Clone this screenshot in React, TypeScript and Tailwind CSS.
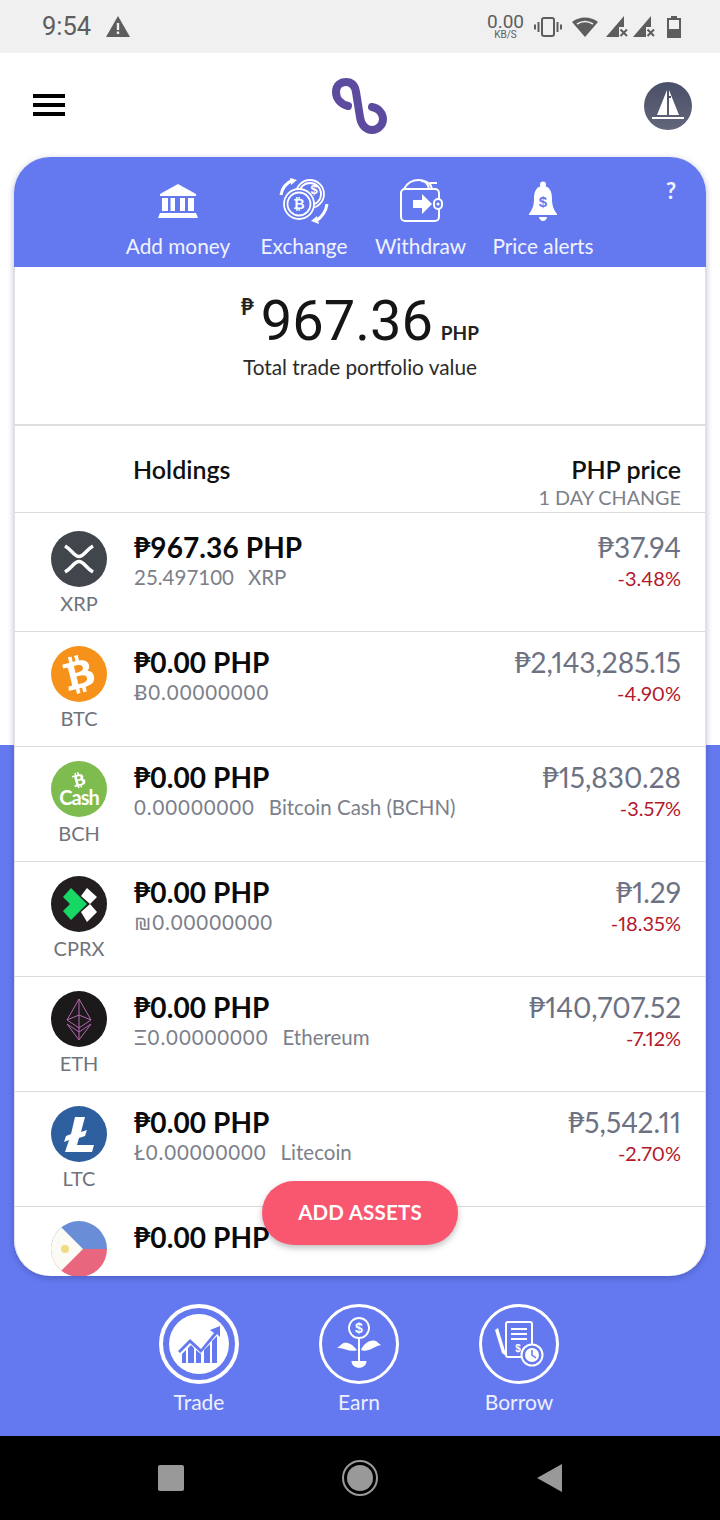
import type { FC, ReactNode } from "react";
import { FaBtc } from "react-icons/fa";

const BLUE = "#6479ef";

const Logo = () => (
  <svg width="56" height="56" viewBox="0 0 56 56" fill="none">
    <path
      d="M17 28C9 26 5 20 5 14C5 7 10 4 15 4C21 4 24 8 25 14L29 39C30 47 35 52 41 52C47 52 52 47 52 41C52 35 47 30 41 29"
      stroke="#5c4b9e"
      strokeWidth="8"
      strokeLinecap="round"
    />
  </svg>
);

const Avatar = () => (
  <svg width="48" height="48" viewBox="0 0 48 48">
    <defs>
      <linearGradient id="av" x1="0" y1="0" x2="0" y2="1">
        <stop offset="0" stopColor="#4a5068" />
        <stop offset="1" stopColor="#62667a" />
      </linearGradient>
    </defs>
    <circle cx="24" cy="24" r="24" fill="url(#av)" />
    <path d="M23 8V33H13ZM25 8L35 33H25Z" fill="#fff" />
    <rect x="8" y="35" width="32" height="2" fill="#fff" />
    <rect x="24" y="14" width="3" height="2" fill="#4a5068" />
  </svg>
);

const BankIcon = () => (
  <svg width="40" height="36" viewBox="0 0 40 36" fill="#fff">
    <path d="M20 1L38 11V13H2V11Z" />
    <path d="M4 15H10V28H4ZM12.500 15H17V28H12.500ZM22 15H27V28H22ZM30 15H36V28H30Z" />
    <path d="M2 30H38L40 35H0Z" />
  </svg>
);

const ExchangeIcon = () => (
  <svg width="50" height="48" viewBox="0 0 50 48" fill="none" stroke="#fff" strokeWidth="1.800">
    <circle cx="31" cy="17" r="14" />
    <circle cx="31" cy="17" r="11" />
    <circle cx="20" cy="27" r="15" fill={BLUE} />
    <circle cx="20" cy="27" r="11.500" />
    <text x="20" y="32" fontSize="14" fontWeight="700" fill="#fff" stroke="none" textAnchor="middle" fontFamily="Liberation Sans, sans-serif">
      ₿
    </text>
    <text x="35" y="17" fontSize="13" fontWeight="700" fill="#fff" stroke="none" textAnchor="middle" fontFamily="Liberation Sans, sans-serif">
      $
    </text>
    <path d="M2 18C3 11 7 6 14 3" strokeWidth="3" />
    <path d="M11 1L18 3L12 8Z" fill="#fff" stroke="none" />
    <path d="M48 27C47 34 43 40 37 44" strokeWidth="3" />
    <path d="M40 47L32 44L38 39Z" fill="#fff" stroke="none" />
  </svg>
);

const WithdrawIcon = () => (
  <svg width="44" height="44" viewBox="0 0 44 44" fill="none" stroke="#fff" strokeWidth="2">
    <path d="M5 10C8 4 14 1 20 1C26 1 29 5 30 10" />
    <path d="M22 2C27 2 32 4 33 10" />
    <path d="M31 4H38" />
    <rect x="2" y="10" width="38" height="32" rx="4" />
    <path d="M14 21H23V15L33 25L23 35V29H14Z" fill="#fff" stroke="none" />
    <rect x="35" y="20" width="8" height="10" rx="4" fill={BLUE} />
    <circle cx="39" cy="25" r="1.500" fill="#fff" stroke="none" />
  </svg>
);

const BellIcon = () => (
  <svg width="30" height="40" viewBox="0 0 30 40">
    <circle cx="15" cy="3.500" r="3" fill="#fff" />
    <path d="M15 5C22 5 24 11 24 18C24 25 26 29 29 33V34H1V33C4 29 6 25 6 18C6 11 8 5 15 5Z" fill="#fff" />
    <path d="M11 36H19C19 38 17 40 15 40C13 40 11 38 11 36Z" fill="#fff" />
    <text x="15" y="26" fontSize="15" fontWeight="700" fill={BLUE} textAnchor="middle" fontFamily="Liberation Sans, sans-serif">
      $
    </text>
  </svg>
);

const XrpIcon = () => (
  <svg width="56" height="56" viewBox="0 0 56 56">
    <circle cx="28" cy="28" r="28" fill="#41454c" />
    <path d="M14 15C21 19 23 25.500 28 25.500C33 25.500 35 19 42 15" fill="none" stroke="#fff" strokeWidth="3.500" />
    <path d="M14 41C21 37 23 30.500 28 30.500C33 30.500 35 37 42 41" fill="none" stroke="#fff" strokeWidth="3.500" />
  </svg>
);

const BtcIcon = () => (
  <div className="flex h-14 w-14 items-center justify-center rounded-full bg-[#f6921a]">
    <FaBtc className="rotate-[-14deg] text-[38px] text-[#fff]" />
  </div>
);

const BchIcon = () => (
  <div className="flex h-14 w-14 flex-col items-center justify-center rounded-full bg-[#7fbc4f] text-white">
    <FaBtc className="mb-[-1px] rotate-[-14deg] text-[16px]" />
    <span className="text-[20px] font-bold leading-[20px] tracking-[-1px]">Cash</span>
  </div>
);

const CprxIcon = () => (
  <svg width="56" height="56" viewBox="0 0 56 56">
    <circle cx="28" cy="28" r="28" fill="#231f20" />
    <path d="M12 21L20 12L36 28L20 44L12 35L19 28Z" fill="#17d864" />
    <path d="M36 12L46 21L39 28L30 20ZM39 28L46 36L36 46L30 36Z" fill="#fff" />
  </svg>
);

const EthIcon = () => (
  <svg width="56" height="56" viewBox="0 0 56 56" fill="none">
    <circle cx="28" cy="28" r="28" fill="#1c191b" />
    <g stroke="#b567b0" strokeWidth="1">
      <path d="M28 8L16 29L28 37L40 29Z" />
      <path d="M28 8V48M16 29L28 24L40 29" />
      <path d="M16 33L28 49L40 33L28 41Z" />
    </g>
  </svg>
);

const LtcIcon = () => (
  <svg width="56" height="56" viewBox="0 0 56 56">
    <circle cx="28" cy="28" r="28" fill="#2d5e9e" />
    <path d="M24 11H34L30 26L36 24L34 30L28 32L26 39H43L41 46H14L18 34L13 36L15 30L20 28Z" fill="#fff" />
  </svg>
);

const FlagIcon = () => (
  <svg width="56" height="56" viewBox="0 0 56 56">
    <defs>
      <clipPath id="flag">
        <circle cx="28" cy="28" r="28" />
      </clipPath>
    </defs>
    <g clipPath="url(#flag)">
      <rect width="56" height="28" fill="#6a8dd8" />
      <rect y="28" width="56" height="28" fill="#e8677f" />
      <path d="M0 -4L32 28L0 60Z" fill="#fbfaf4" />
      <circle cx="14" cy="28" r="4" fill="#f0dc80" />
    </g>
  </svg>
);

const TradeIcon = () => (
  <div className="flex h-[80px] w-[80px] items-center justify-center rounded-full border-[4px] border-white">
    <div className="flex h-[60px] w-[60px] items-center justify-center rounded-full bg-white">
      <svg width="44" height="40" viewBox="0 0 44 40" fill={BLUE}>
        <path d="M5 39V30L9 26V39ZM11 39V24L14 21L17 24V39ZM19 39V26L24 30V39ZM27 39V26L33 20V39ZM35 39V17L40 12V39Z" />
        <path d="M1 27L13 15L24 25L37 9L33 6L43 2L43 13L40 10L24 29L13 19L3 29Z" />
      </svg>
    </div>
  </div>
);

const EarnIcon = () => (
  <div className="flex h-[80px] w-[80px] items-center justify-center rounded-full border-[3px] border-white">
    <svg width="46" height="54" viewBox="0 0 46 54" fill="none">
      <circle cx="23" cy="11" r="10" stroke="#fff" strokeWidth="1.800" />
      <text x="23" y="16" fontSize="14" fontWeight="700" fill="#fff" textAnchor="middle" fontFamily="Liberation Sans, sans-serif">
        $
      </text>
      <path d="M23 21V46" stroke="#fff" strokeWidth="2" />
      <path d="M21 33C16 26 9 24 6 27C4 29 2 30 1 31C8 30 14 36 21 33Z" fill="#fff" />
      <path d="M25 33C28 25 36 22 40 24C42 26 44 27 45 28C38 29 32 36 25 33Z" fill="#fff" />
      <path d="M13 44H33C33 50 28 53 23 53C18 53 13 50 13 44Z" fill="#fff" transform="translate(5.750 11) scale(0.750)" />
    </svg>
  </div>
);

const BorrowIcon = () => (
  <div className="flex h-[80px] w-[80px] items-center justify-center rounded-full border-[3px] border-white">
    <svg width="50" height="46" viewBox="0 0 50 46" fill="none">
      <path d="M1 9L4 7L11 30L12 35L8 32Z" fill="#fff" />
      <rect x="12" y="1" width="26" height="35" rx="2" stroke="#fff" strokeWidth="2" />
      <path d="M17 8H33M17 13H33M17 18H33" stroke="#fff" strokeWidth="2" />
      <text x="24" y="31" fontSize="10" fontWeight="700" fill="#fff" textAnchor="middle" fontFamily="Liberation Sans, sans-serif">
        $
      </text>
      <circle cx="38" cy="34" r="10.500" fill={BLUE} stroke="#fff" strokeWidth="2" />
      <circle cx="38" cy="34" r="7" fill="#fff" />
      <path d="M38 29V34L42 37" stroke={BLUE} strokeWidth="1.500" />
    </svg>
  </div>
);

const StatusBar = () => (
  <div className="flex h-[53px] items-center bg-[#f0f0f0] pl-[42px] pr-[39px] font-['Roboto',sans-serif] text-[#5d5d5d]">
    <span className="text-[25.500px] leading-none">9:54</span>
    <svg className="ml-[15px]" width="24" height="21" viewBox="0 0 24 21">
      <path d="M12 0L24 21H0Z" fill="#5d5d5d" />
      <rect x="10.800" y="7" width="2.400" height="7" fill="#f0f0f0" />
      <rect x="10.800" y="15.500" width="2.400" height="2.500" fill="#f0f0f0" />
    </svg>
    <div className="ml-auto flex items-center">
      <div className="flex flex-col items-center">
        <span className="text-[19px] leading-[17px]">0.00</span>
        <span className="text-[10px] leading-[10px]">KB/S</span>
      </div>
      <svg className="ml-[10px]" width="28" height="20" viewBox="0 0 28 20" fill="none" stroke="#5d5d5d" strokeWidth="2">
        <rect x="8" y="1" width="12" height="18" rx="2" />
        <path d="M4.500 5V15M1 7.500V12.500M23.500 5V15M27 7.500V12.500" />
      </svg>
      <svg className="ml-[10px]" width="26" height="20" viewBox="0 0 26 20">
        <path d="M13 20L0 5C7 -1 19 -1 26 5Z" fill="#5d5d5d" />
        <path d="M5 7C10 4 16 4 21 7" fill="none" stroke="#f0f0f0" strokeWidth="1.500" />
      </svg>
      <svg className="ml-[8px]" width="22" height="21" viewBox="0 0 22 21">
        <path d="M18 0V11H13V21H0Z" fill="#5d5d5d" />
        <path d="M14.500 13.500L21 20M21 13.500L14.500 20" stroke="#5d5d5d" strokeWidth="2" />
      </svg>
      <svg className="ml-[5px]" width="22" height="21" viewBox="0 0 22 21">
        <path d="M18 0V11H13V21H0Z" fill="#5d5d5d" />
        <path d="M14.500 13.500L21 20M21 13.500L14.500 20" stroke="#5d5d5d" strokeWidth="2" />
      </svg>
      <svg className="ml-[12px]" width="14" height="22" viewBox="0 0 14 22">
        <path d="M4 0H10V2H14V22H0V2H4Z" fill="#5d5d5d" />
        <rect x="2" y="4" width="10" height="9" fill="#f0f0f0" />
      </svg>
    </div>
  </div>
);

const Action: FC<{ label: string; icon: ReactNode; width: string }> = ({ label, icon, width }) => (
  <div className={`flex flex-col items-center ${width}`}>
    <div className="flex h-[48px] items-center">{icon}</div>
    <span className="mt-[9px] whitespace-nowrap text-[20.800px] leading-[24px] text-[#f1f3ff]">{label}</span>
  </div>
);

interface Holding {
  ticker: string;
  icon: ReactNode;
  value: string;
  amount: string;
  name?: string;
  price?: string;
  change?: string;
  first?: boolean;
}

const holdings: Holding[] = [
  { ticker: "XRP", icon: <XrpIcon />, value: "₱967.36 PHP", amount: "25.497100", name: "XRP", price: "₱37.94", change: "-3.48%", first: true },
  { ticker: "BTC", icon: <BtcIcon />, value: "₱0.00 PHP", amount: "Ƀ0.00000000", price: "₱2,143,285.15", change: "-4.90%" },
  { ticker: "BCH", icon: <BchIcon />, value: "₱0.00 PHP", amount: "0.00000000", name: "Bitcoin Cash (BCHN)", price: "₱15,830.28", change: "-3.57%" },
  { ticker: "CPRX", icon: <CprxIcon />, value: "₱0.00 PHP", amount: "₪0.00000000", price: "₱1.29", change: "-18.35%" },
  { ticker: "ETH", icon: <EthIcon />, value: "₱0.00 PHP", amount: "Ξ0.00000000", name: "Ethereum", price: "₱140,707.52", change: "-7.12%" },
  { ticker: "LTC", icon: <LtcIcon />, value: "₱0.00 PHP", amount: "Ł0.00000000", name: "Litecoin", price: "₱5,542.11", change: "-2.70%" },
];

const Row: FC<{ item: Holding }> = ({ item }) => (
  <div className={`flex border-t border-[#dcdcdc] pr-[25px] ${item.first ? "h-[119px] pt-[18px]" : "h-[115px] pt-[14px]"}`}>
    <div className="flex w-[120px] shrink-0 flex-col items-center pl-[10px]">
      {item.icon}
      <span className="mt-[4px] whitespace-nowrap text-[20px] leading-[24px] text-[#6f737b]">{item.ticker}</span>
    </div>
    <div className="flex flex-col">
      <span className="text-[28px] font-bold leading-[32px] tracking-[0.1px] text-[#0a0a0a]">{item.value}</span>
      <span className="mt-[2px] flex gap-[14px] text-[20.500px] leading-[24px] text-[#7c808a]">
        <span className={item.first ? "" : "tracking-[0.900px]"}>{item.amount}</span>
        {item.name && <span>{item.name}</span>}
      </span>
    </div>
    <div className="ml-auto flex flex-col items-end">
      <span className="text-[28px] leading-[32px] text-[#6d7283] proportional-nums">{item.price}</span>
      <span className="mt-[3px] text-[20px] leading-[24px] text-[#b3182c] proportional-nums">{item.change}</span>
    </div>
  </div>
);

const NavItem: FC<{ label: string; icon: ReactNode }> = ({ label, icon }) => (
  <div className="flex w-[100px] flex-col items-center">
    {icon}
    <span className="mt-[6px] text-[21px] leading-[24px] text-[#eef0ff]">{label}</span>
  </div>
);

export default function App() {
  return (
    <div className="flex h-[1520px] w-[720px] flex-col overflow-hidden bg-white font-['Lato',sans-serif]">
      <StatusBar />

      <div className="flex h-[104px] items-center justify-between pl-[33px] pr-[28px]">
        <div className="flex w-[32px] flex-col gap-[5px]">
          <div className="h-[4px] bg-black" />
          <div className="h-[4px] bg-black" />
          <div className="h-[4px] bg-black" />
        </div>
        <div className="ml-[8px] mt-[2px]">
          <Logo />
        </div>
        <div className="mt-[2px]">
          <Avatar />
        </div>
      </div>

      <div className="flex flex-1 flex-col bg-[linear-gradient(#fff_0,#fff_588px,#6479ef_588px)] px-[14px]">
        <div className="relative h-[1119px] overflow-hidden rounded-[36px] bg-white shadow-[inset_1px_0_#e0e0e0,inset_-1px_0_#e0e0e0,0_2px_6px_rgba(40,50,120,0.35)]">
          <div className="relative flex h-[110px] gap-[28px] bg-[#6479ef] pl-[111px] pt-[20px]">
            <Action label="Add money" icon={<BankIcon />} width="w-[106px]" />
            <Action label="Exchange" icon={<ExchangeIcon />} width="w-[90px]" />
            <Action label="Withdraw" icon={<WithdrawIcon />} width="w-[87px]" />
            <Action label="Price alerts" icon={<BellIcon />} width="w-[102px]" />
            <span className="absolute right-[30px] top-[20px] text-[22px] font-bold leading-[28px] text-[#f1f3ff]">?</span>
          </div>

          <div className="flex h-[159px] flex-col items-center border-b-2 border-[#dedede] pt-[24px]">
            <div className="flex items-end">
              <span className="mb-[32px] mr-[7px] text-[22px] font-bold leading-[24px] text-[#222]">₱</span>
              <span className="font-['Roboto',sans-serif] text-[56px] font-normal leading-[60px] text-[#151515]">967.36</span>
              <span className="mb-[6px] ml-[8px] text-[19px] font-bold leading-[24px] text-[#222]">PHP</span>
            </div>
            <span className="mt-[3px] text-[20.800px] leading-[26px] text-[#2b2b2b]">Total trade portfolio value</span>
          </div>

          <div className="flex h-[86px] justify-between pl-[119px] pr-[25px] pt-[27px]">
            <span className="text-[25px] font-semibold leading-[32px] text-[#111]">Holdings</span>
            <div className="flex flex-col items-end">
              <span className="text-[25px] font-semibold leading-[32px] text-[#111]">PHP price</span>
              <span className="text-[19.800px] leading-[25px] text-[#7c808a]">1 DAY CHANGE</span>
            </div>
          </div>

          {holdings.map((item) => (
            <Row key={item.ticker} item={item} />
          ))}

          <div className="flex border-t border-[#dcdcdc] pt-[14px]">
            <div className="flex w-[120px] shrink-0 justify-center pl-[10px]">
              <FlagIcon />
            </div>
            <span className="text-[28px] font-bold leading-[32px] tracking-[0.1px] text-[#0a0a0a]">₱0.00 PHP</span>
          </div>

          <button
            type="button"
            className="absolute bottom-[31px] left-[248px] h-[64px] w-[196px] rounded-full bg-[#f9566f] pb-[2px] text-[20.500px] font-bold tracking-[0.2px] text-[#fff] shadow-[0_3px_6px_rgba(0,0,0,0.25)]"
          >
            ADD ASSETS
          </button>
        </div>

        <div className="flex flex-1 justify-center gap-[60px] pr-[2px] pt-[28px]">
          <NavItem label="Trade" icon={<TradeIcon />} />
          <NavItem label="Earn" icon={<EarnIcon />} />
          <NavItem label="Borrow" icon={<BorrowIcon />} />
        </div>
      </div>

      <div className="flex h-[84px] items-center justify-center gap-[158px] bg-black">
        <div className="h-[26px] w-[26px] rounded-[2px] bg-[#999]" />
        <div className="flex h-[36px] w-[36px] items-center justify-center rounded-full border-[2.500px] border-[#999]">
          <div className="h-[26px] w-[26px] rounded-full bg-[#999]" />
        </div>
        <svg width="26" height="30" viewBox="0 0 26 30">
          <path d="M26 1V29L1 15Z" fill="#999" />
        </svg>
      </div>
    </div>
  );
}
